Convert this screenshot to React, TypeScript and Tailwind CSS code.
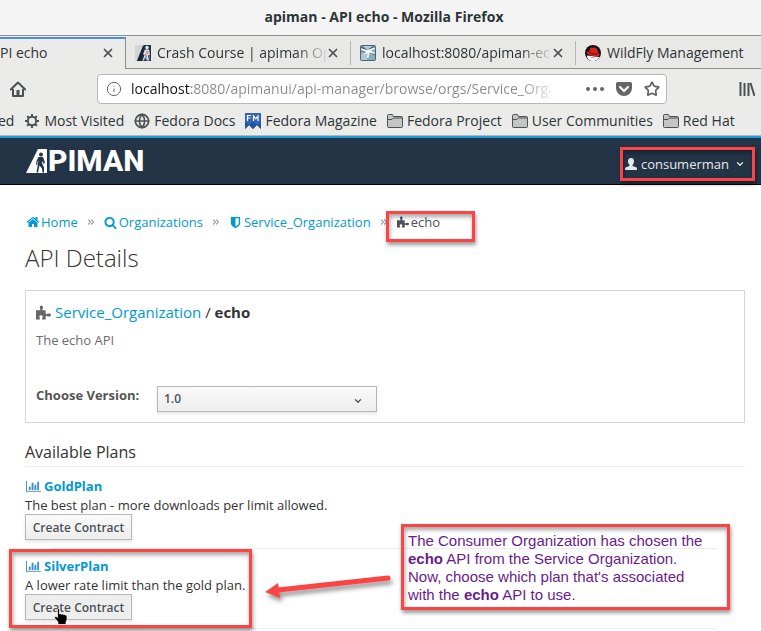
import type { ReactNode } from "react";
import { ChevronDown, ChevronsRight, Globe, Info, Star, X } from "lucide-react";

const HOME =
  "M1472 992v480q0 26-19 45t-45 19h-384v-384h-256v384h-384q-26 0-45-19t-19-45v-480q0-1 .5-3t.5-3l575-474 575 474q1 2 1 6zm223-69l-62 74q-8 9-21 11h-3q-13 0-21-7l-692-577-692 577q-12 8-24 7-13-2-21-11l-62-74q-8-10-7-23.5t11-21.5l719-599q32-26 76-26t76 26l244 204v-195q0-14 9-23t23-9h192q14 0 23 9t9 23v408l219 182q10 8 11 21.5t-7 23.5z";
const SEARCH =
  "M1216 832q0-185-131.5-316.5t-316.5-131.5-316.5 131.5-131.5 316.5 131.5 316.5 316.5 131.5 316.5-131.5 131.5-316.5zm512 832q0 52-38 90t-90 38q-54 0-90-38l-343-342q-179 124-399 124-143 0-273.5-55.5t-225-150-150-225-55.5-273.5 55.5-273.5 150-225 225-150 273.5-55.5 273.5 55.5 225 150 150 225 55.5 273.5q0 220-124 399l343 343q37 37 37 90z";
const SHIELD =
  "M1344 960v-640h-448v1137q119-63 213-137 235-184 235-360zm192-768v768q0 86-33.5 170.5t-83 150-118 127.5-126.5 103-121 77.5-89.5 49.5-42.5 20q-12 6-26 6t-26-6q-16-7-42.5-20t-89.5-49.5-121-77.5-126.5-103-118-127.5-83-150-33.5-170.5v-768q0-26 19-45t45-19h1152q26 0 45 19t19 45z";
const BARS =
  "M640 896v512h-256v-512h256zm384-512v1024h-256v-1024h256zm1024 1152v128h-2048v-1536h128v1408h1920zm-640-896v768h-256v-768h256zm384-384v1152h-256v-1152h256z";

function Glyph({ path, className }: { path: string; className: string }) {
  return (
    <svg viewBox="0 0 1792 1792" className={className} fill="currentColor" aria-hidden="true">
      <path d={path} />
    </svg>
  );
}

function Puzzle({ className }: { className: string }) {
  return (
    <svg viewBox="0 0 14 14" className={className} fill="currentColor" aria-hidden="true">
      <path d="M0 5h3.6c.6 0 .7-.5.4-1C3.2 2.700 3.300.5 5 .5s1.900 2.200 1 3.500c-.3.5-.1 1 .5 1H9v3c0 .7.500.8 1 .4 1-.8 4-1 4 .9s-3 1.800-4 1c-.5-.4-1-.2-1 .4V13.500H6.200c-.6 0-.8-.4-.5-.9.900-1.300.8-3.100-1-3.100s-1.900 1.800-1 3.100c.3.500.1.9-.5.9H0z" />
    </svg>
  );
}

function HomeOutline() {
  return (
    <svg viewBox="0 0 16 16" className="size-4" fill="none" stroke="#4c5254" strokeWidth="2" strokeLinejoin="round" aria-hidden="true">
      <path d="M.8 8.500 8 1.500l7.200 7" strokeLinecap="round" />
      <path d="M3 8v7h10V8" />
      <path d="M6.500 9h3v5h-3z" fill="#4c5254" stroke="none" />
    </svg>
  );
}

function Gear() {
  return (
    <svg viewBox="0 0 16 16" className="size-4 shrink-0" fill="none" stroke="#4c5254" aria-hidden="true">
      <circle cx="8" cy="8" r="4.200" strokeWidth="2" />
      <path
        d="M8 1v2.500M8 12.500V15M1 8h2.500M12.500 8H15M3.100 3.100l1.700 1.700M11.200 11.200l1.700 1.700M3.100 12.900l1.700-1.700M11.200 4.800l1.700-1.700"
        strokeWidth="2"
      />
    </svg>
  );
}

function Folder() {
  return (
    <svg viewBox="0 0 16 14" className="h-3.5 w-4 shrink-0" fill="#c3c6c3" stroke="#4c5254" aria-hidden="true">
      <path d="M.5 12.500V1.500q0-1 1-1h3.500q.8 0 1 1l.4 1h8q1.100 0 1.100 1v9q0 1-1 1h-13q-1 0-1-1z" />
      <path d="M.5 5.500 5 5.500l1.500-1.500h9" fill="none" />
    </svg>
  );
}

function FedoraMag() {
  return (
    <svg viewBox="0 0 16 16" className="size-4 shrink-0" aria-hidden="true">
      <path d="M0 0h16v16l-4-4-4 4-4-4-4 4z" fill="#3465b4" />
      <path d="M0 9l4 3 4-3 4 3 4-3v7l-4-4-4 4-4-4-4 4z" fill="#24539c" />
      <path d="M2.500 8V2.500H6M2.500 5h3M8.500 8V3l2.200 2.800L13 3v5" fill="none" stroke="#fff" strokeWidth="1.200" />
    </svg>
  );
}

function ApimanFavicon() {
  return (
    <svg viewBox="0 0 16 16" className="size-4 shrink-0" aria-hidden="true">
      <path d="M0 0h16v16H0z" fill="#d3d5d4" />
      <path d="M8.500 0H16v16H2z" fill="#243447" />
      <path d="M2 16 8 1l1 5-3 10z" fill="#17253a" />
      <circle cx="12" cy="2.500" r="1.700" fill="#e8eaec" />
      <path d="M10 4.500h4l1 5-2 1 1 5h-2l-1.500-4-1.500 4H7.500l2-5.500-1.500-1z" fill="#dfe2e5" />
      <path d="M11 6h2.500v3H11z" fill="#e58f8b" />
      <path d="m10 9 1.500 2-2 4M14 10l1 5" stroke="#687788" fill="none" />
    </svg>
  );
}

function EchoFavicon() {
  return (
    <svg viewBox="0 0 16 16" className="size-4 shrink-0" aria-hidden="true">
      <rect x=".5" y=".5" width="15" height="15" rx="1" fill="#8cabba" stroke="#48657c" />
      <path d="M1 1h14v3L9 6 1 4z" fill="#7d9aaa" />
      <path d="M3.500 1h9L9.500 4h-3z" fill="#b9ccd5" />
      <path d="M1 9 7 7v8H1z" fill="#b5c8d2" />
      <path d="m1 5.500 5 1.500M10 6.500l5 3.500M1 2l5 2.500M14 1.500 9 4" stroke="#3d5a72" />
      <path d="M1 3.500 7 5l2-.5L15 2.500V4l-4 1.500L15 8v1L9.500 7.500 8.500 13H7l.5-4.500L4 9l2-2-5-2z" fill="#f3f7f8" />
    </svg>
  );
}

function RedHat() {
  return (
    <svg viewBox="0 0 16 16" className="size-4 shrink-0" aria-hidden="true">
      <circle cx="8" cy="8" r="8" fill="#111" />
      <path d="M2 10.500 14.500 12Q12 16 8 16T2 12z" fill="#fff" />
      <path d="M5 11.500l1.500 1.500 2-1 1.500 1.500" stroke="#777" fill="none" strokeWidth=".7" />
      <path d="M4.500 5C5 2.500 6.200 2 7.500 2.800 9.500 2 12 2.200 12.500 5l.6 3c2.200.8 1.700 3-.6 3.400C8.500 12 2 9.500 1.600 7.500c-.2-1 1.200-1.300 2.500-1z" fill="#d9221f" />
      <path d="M4.200 6.500C5 8.500 9.500 9.800 12.600 8.500" stroke="#5a0d0b" fill="none" />
    </svg>
  );
}

function Tab({ icon, title, fade, last }: { icon: ReactNode; title: string; fade?: boolean; last?: boolean }) {
  return (
    <div className="flex h-8 w-[225px] shrink-0 items-center border-b border-[#8f8f8d] bg-[#e8e8e6] pl-[9px]">
      {icon}
      <span
        className={
          "ml-1.5 flex-1 overflow-hidden whitespace-nowrap " +
          (fade ? "[mask-image:linear-gradient(90deg,#000_82%,transparent_102%)]" : "")
        }
      >
        {title}
      </span>
      {!last && (
        <>
          <button aria-label="Close tab" className="mr-2.5">
            <X className="size-3.5 text-[#4c5254]" strokeWidth={3} />
          </button>
          <span className="h-6 w-px bg-[#b5b5b3]" />
        </>
      )}
    </div>
  );
}

function Bookmark({ icon, label }: { icon: ReactNode; label: string }) {
  return (
    <a href="#" className="flex shrink-0 items-center gap-1 whitespace-nowrap">
      {icon}
      {label}
    </a>
  );
}

function Logo() {
  return (
    <a href="#" aria-label="Apiman" className="flex items-center text-white">
      <svg viewBox="0 0 22 24" className="h-6 w-[22px]" aria-hidden="true">
        <path d="M12 0h9v24H0z" fill="#fff" />
        <circle cx="15" cy="5.500" r="2" fill="#243447" />
        <path
          d="M12.500 8h4.500l2 5.500-1.500 1.500-.8-3-.7 2 2 4.500v5h-1.500l-.5-4-2.500-3-1.500 7h-1.500l1.500-9 .5-3-1 1.500-.3 3-1.200-.5.500-3.500z"
          fill="#243447"
        />
      </svg>
      <span className="font-['Roboto',sans-serif] text-[30px] font-extrabold leading-8">PIMAN</span>
    </a>
  );
}

const markClass = "pointer-events-none absolute border-[3px] border-[#fd4343] shadow-[1px_3px_4px_rgba(0,0,0,0.4),inset_1px_3px_4px_rgba(0,0,0,0.35)]";

function Plan({ name, description, children, hovered }: { name: string; description: string; children?: ReactNode; hovered?: boolean }) {
  return (
    <li className="relative h-20 pt-[7px] text-[13px] leading-5">
      <a href="#" className="flex items-center gap-[3px] pl-px font-bold text-[#0099d3]">
        <svg viewBox="0 0 2048 1792" className="h-[13px] w-[15px]" fill="#3f8ed0" aria-hidden="true">
          <path d={BARS} />
        </svg>
        {name}
      </a>
      <p className="-mt-px">{description}</p>
      <button
        className={
          "-mt-px block h-[26px] w-[107px] border border-[#b7b7b7] pt-0.5 text-[12px] font-semibold leading-4 text-[#4d5258] shadow-[0_2px_3px_rgba(3,3,3,0.1)] " +
          (hovered ? "bg-[#eeeeee]" : "bg-linear-to-b from-[#fafafa] to-[#ededed]")
        }
      >
        Create Contract
      </button>
      <span className="absolute inset-x-7 bottom-0 h-px bg-[#ececec]" />
      {children}
    </li>
  );
}

function Separator() {
  return <ChevronsRight className="mx-2 size-2.5 text-[#8b8b8b]" strokeWidth={2.5} aria-hidden="true" />;
}

export default function App() {
  return (
    <div className="relative min-h-screen overflow-hidden bg-white font-['Open_Sans',sans-serif] text-[#333]">
      <div className="bg-[#ebebe9] text-sm text-[#2e3436]">
        <div className="flex h-9 items-center justify-center border-b border-[#8f8f8d] bg-[#f4f4f4] pb-0.5 pl-[7px] font-bold">
          apiman - API echo - Mozilla Firefox
        </div>

        <div className="flex h-[33px] overflow-hidden pt-px">
          <div className="flex w-[126px] shrink-0 items-center justify-between border-r border-t-2 border-r-[#8f8f8d] border-t-[#4a90d9] pb-0.5 pr-2.5">
            PI echo
            <button aria-label="Close tab">
              <X className="size-3.5 text-[#4c5254]" strokeWidth={3} />
            </button>
          </div>
          <Tab icon={<ApimanFavicon />} title="Crash Course | apiman Op" fade />
          <Tab icon={<EchoFavicon />} title="localhost:8080/apiman-ec" fade />
          <Tab icon={<RedHat />} title="WildFly Management" last />
        </div>

        <div className="flex h-10 items-center pl-2.5 pr-1.5">
          <button aria-label="Home" className="mr-[71px]">
            <HomeOutline />
          </button>
          <div className="flex h-[30px] flex-1 items-center rounded-[4px] border border-[#b8b8b6] bg-white px-2 text-[#6a6a6a]">
            <Info className="size-4 shrink-0" strokeWidth={1.5} />
            <input
              aria-label="Address"
              readOnly
              value="localhost:8080/apimanui/api-manager/browse/orgs/Service_Organization/echo"
              className="ml-[9px] mr-9 w-0 flex-1 bg-[linear-gradient(90deg,#111_60px,#8a8a8a_60px)] bg-clip-text text-transparent outline-none [mask-image:linear-gradient(90deg,#000_93%,transparent_102%)]"
            />
            <button aria-label="Page actions" className="flex gap-[3px]">
              <span className="size-1 rounded-full bg-[#666]" />
              <span className="size-1 rounded-full bg-[#666]" />
              <span className="size-1 rounded-full bg-[#666]" />
            </button>
            <button aria-label="Save to Pocket" className="ml-3">
              <svg viewBox="0 0 16 14" className="h-3.5 w-4">
                <path d="M1.500 0h13Q16 0 16 1.500V6a8 8 0 0 1-16 0V1.500Q0 0 1.500 0z" fill="#666" />
                <path d="m4 5 4 4 4-4" fill="none" stroke="#fff" strokeWidth="2" strokeLinecap="round" />
              </svg>
            </button>
            <button aria-label="Bookmark this page" className="-mr-0.5 ml-3">
              <Star className="size-4 text-[#5f5f5f]" strokeWidth={2.5} />
            </button>
          </div>
          <button aria-label="Library" className="ml-[72px]">
            <svg viewBox="0 0 16 14" className="h-3.5 w-4" stroke="#4c5254" strokeWidth="2">
              <path d="M1.500 0v14M5.500 1v13M9.500 1v13M11.500 1l4 13" />
            </svg>
          </button>
        </div>

        <nav className="flex h-[27px] items-center gap-2.5 overflow-hidden border-b border-[#b5b5b3] pb-0.5">
          <a href="#" className="-ml-0.5 shrink-0">
            ed
          </a>
          <Bookmark icon={<Gear />} label="Most Visited" />
          <Bookmark icon={<Globe className="size-4 text-[#4c5254]" strokeWidth={2.5} />} label="Fedora Docs" />
          <Bookmark icon={<FedoraMag />} label="Fedora Magazine" />
          <Bookmark icon={<Folder />} label="Fedora Project" />
          <Bookmark icon={<Folder />} label="User Communities" />
          <Bookmark icon={<Folder />} label="Red Hat" />
        </nav>
      </div>

      <header className="flex h-[49px] items-center justify-between border-b border-t-2 border-b-black border-t-[#199ddc] bg-[#243447] pl-[26px] pr-4">
        <Logo />
        <div className="relative mt-1.5">
          <button className="flex items-center text-[13px] leading-5 text-[#e6e8ea]">
            <svg viewBox="0 0 12 12" className="mr-1 size-3" fill="currentColor" aria-hidden="true">
              <path d="M6 0c2 0 3 1.300 3 3.200 0 1.800-.8 3-1.500 3.800v1L11 9.300q1 .4 1 1.500V12H0v-1.200q0-1.100 1-1.500L4.500 8V7C3.800 6.200 3 5 3 3.200 3 1.300 4 0 6 0z" />
            </svg>
            consumerman
            <ChevronDown className="ml-1.5 size-2.5" strokeWidth={3} />
          </button>
          <span className={markClass + " -left-[5px] -right-2.5 -top-[7px] h-[34px]"} />
        </div>
      </header>

      <main className="px-[25px] pr-4 pt-[27px]">
        <nav className="flex items-center text-[13px] leading-5 text-[#0099d3]" aria-label="Breadcrumb">
          <a href="#" className="flex items-center gap-px pl-px">
            <Glyph path={HOME} className="size-[14px]" />
            Home
          </a>
          <Separator />
          <a href="#" className="flex items-center gap-0.5">
            <Glyph path={SEARCH} className="size-[13px]" />
            Organizations
          </a>
          <Separator />
          <a href="#" className="flex items-center gap-0.5">
            <Glyph path={SHIELD} className="size-[13px]" />
            Service_Organization
          </a>
          <Separator />
          <span className="relative flex items-center gap-0.5 text-[#4d5258]">
            <Puzzle className="size-3" />
            echo
            <span className={markClass + " -left-[11px] -top-px h-[31px] w-[89px]"} />
          </span>
        </nav>

        <h1 className="mt-3 text-2xl font-light leading-7">API Details</h1>

        <section className="mt-[18px] h-[133px] border border-[#d5d5d5] px-2.5 pt-[11px]">
          <h2 className="flex items-center text-[15px] leading-5">
            <Puzzle className="mr-1 size-[15px] text-[#666]" />
            <a href="#" className="text-[#0099d3]">
              Service_Organization
            </a>
            <span className="whitespace-pre"> / </span>
            <b>echo</b>
          </h2>
          <p className="mt-2 text-[13px] leading-5 text-[#6c6c6c]">The echo API</p>
          <div className="mt-[35px] flex items-start">
            <label htmlFor="version" className="w-[121px] text-[13px] font-bold leading-5 text-[#555]">
              Choose Version:
            </label>
            <div className="relative mt-px">
              <select
                id="version"
                className="block h-[26px] w-[220px] appearance-none border border-[#b7b7b7] bg-linear-to-b from-[#fafafa] to-[#ededed] px-1.5 text-[12px] font-semibold text-[#4d5258] shadow-[0_2px_3px_rgba(3,3,3,0.1)]"
              >
                <option>1.0</option>
              </select>
              <ChevronDown className="pointer-events-none absolute right-3.5 top-2.5 size-2.5 text-[#4d5258]" strokeWidth={3} />
            </div>
          </div>
        </section>

        <h2 className="mt-[17px] h-[27px] border-b border-[#ececec] text-base leading-6">Available Plans</h2>
        <ul className="pt-0.5">
          <Plan name="GoldPlan" description="The best plan - more downloads per limit allowed." />
          <Plan name="SilverPlan" description="A lower rate limit than the gold plan." hovered>
            <span className={markClass + " -left-4 top-0 h-[79px] w-[243px]"} />
            <svg viewBox="0 0 16 17" className="absolute left-7 top-[59px] h-[17px] w-4" aria-hidden="true">
              <path
                d="M4.500 1q1.500-1 2 .5V6q1-.8 2 .2 1-.7 2 .4 1-.6 2 .5 1.500-.3 1.500 1.200v3.500L13 14v2.500H5V14L2 10.500Q.8 9 2 8.500t2.500 1z"
                fill="#000"
                stroke="#fff"
                strokeWidth=".7"
              />
            </svg>
            <svg viewBox="0 0 130 36" className="absolute left-[238px] top-6 h-9 w-[130px] drop-shadow-[2px_4px_2px_rgba(0,0,0,0.4)]" aria-hidden="true">
              <path d="M125 5 15 17" stroke="#fd4343" strokeWidth="5" strokeLinecap="round" />
              <path d="M2 19 15 10l2 15z" fill="#fd4343" />
            </svg>
            <p
              className={
                markClass +
                " -top-[25px] left-[376px] h-[86px] w-[329px] pl-1 pt-[5px] font-['Liberation_Sans',sans-serif] text-[15px] leading-[18px] text-[#6a1b8c]"
              }
            >
              The Consumer Organization has chosen the
              <br />
              <b>echo</b> API from the Service Organization.
              <br />
              Now, choose which plan that's associated
              <br />
              with the <b>echo</b> API to use.
            </p>
          </Plan>
        </ul>
      </main>
    </div>
  );
}
